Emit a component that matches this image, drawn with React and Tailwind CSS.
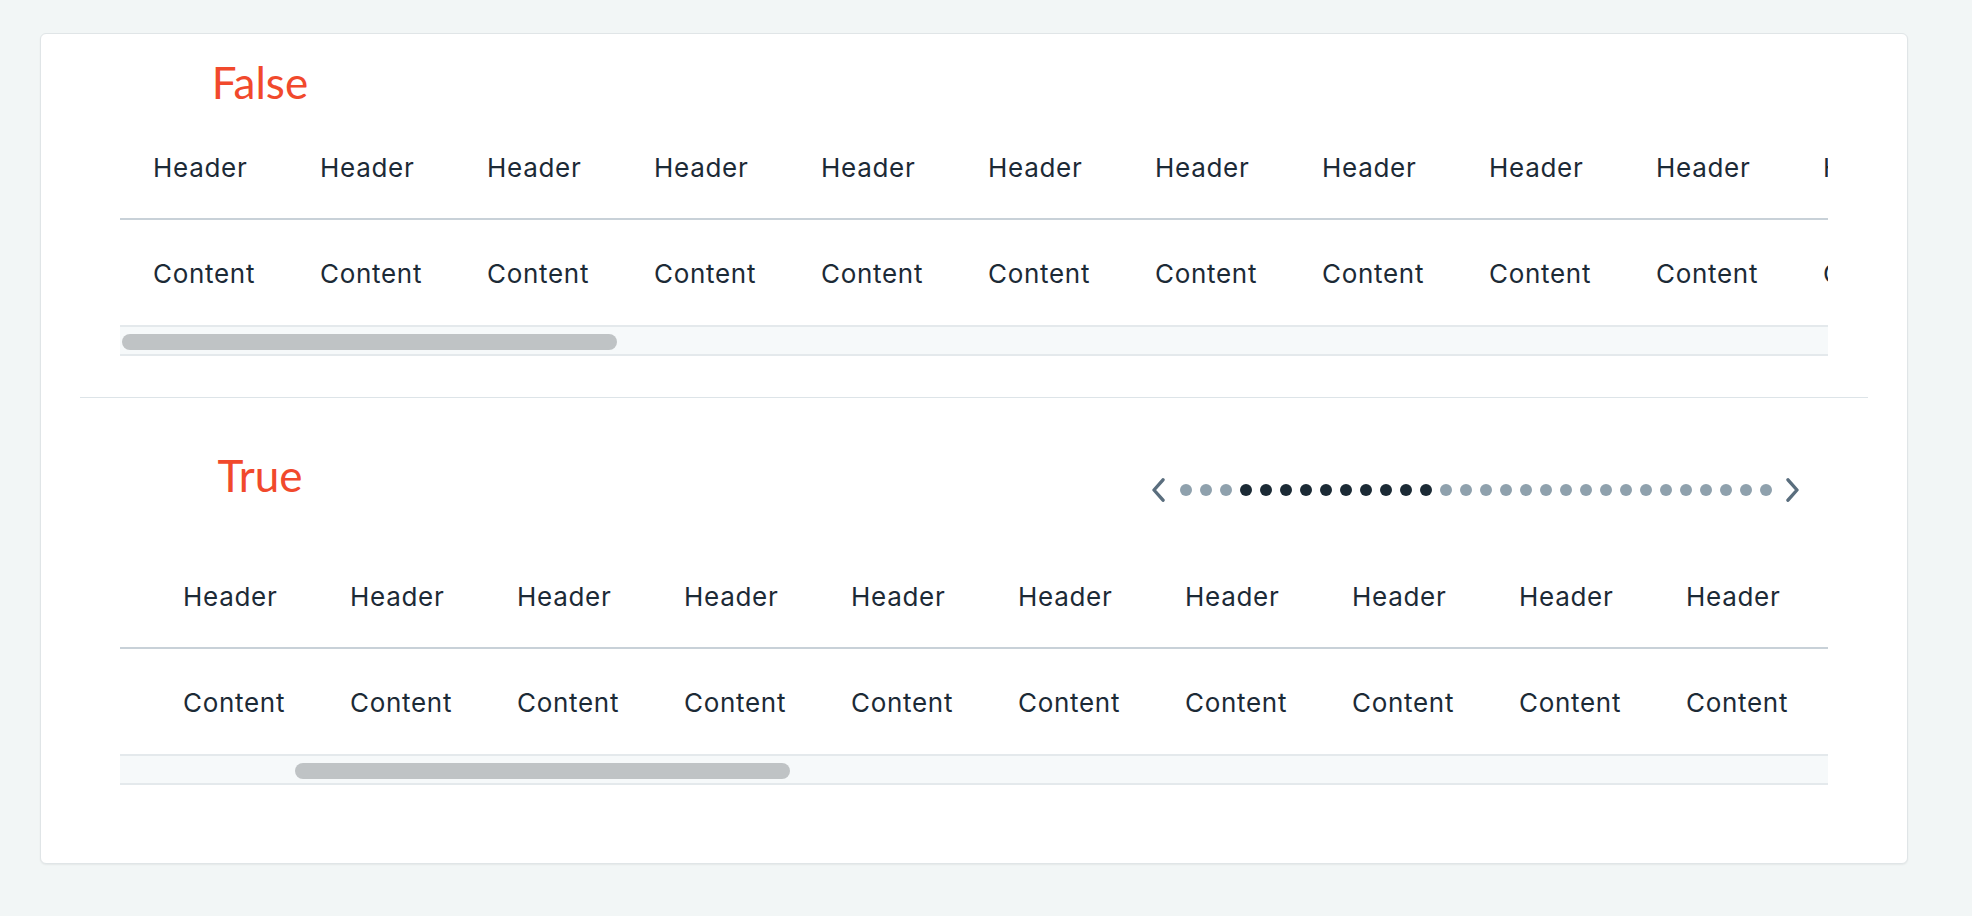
const COLS_OFF = Array.from({ length: 11 }, (_, i) => i)
const COLS_ON = Array.from({ length: 10 }, (_, i) => i)

function Chevron({ dir }) {
  const d = dir === 'left' ? 'M11 1.8 L2 12 L11 22.2' : 'M2 1.8 L11 12 L2 22.2'
  return (
    <svg width="13" height="24" viewBox="0 0 13 24" className="shrink-0">
      <path d={d} fill="none" stroke="#5a6e7e" strokeWidth="3.4" strokeLinecap="round" strokeLinejoin="round" />
    </svg>
  )
}

function Scrollbar({ offset }) {
  return (
    <div className="h-[31px] border-t-2 border-b-2 border-[#e4e9ec] bg-[#f6f9fa] pt-[7px]">
      <div className="h-[16px] w-[495px] rounded-full bg-[#bfc3c5]" style={{ marginLeft: offset }} />
    </div>
  )
}

function Table({ cols, shift, thumb }) {
  return (
    <div className="mx-[40px] overflow-hidden font-['Inter',sans-serif] text-[26px] tracking-[0.7px] text-[#1c2a36]">
      <div className="flex">
        {shift > 0 && <div className="w-[30px] shrink-0" />}
        {cols.map((i) => (
          <div key={i} className="w-[167px] shrink-0 whitespace-nowrap pl-[33px] pt-[34px] pb-[32px] leading-[37px]">
            Header
          </div>
        ))}
      </div>
      <div className="h-[2px] bg-[#c8d1d8]" />
      <div className="flex">
        {shift > 0 && <div className="w-[30px] shrink-0" />}
        {cols.map((i) => (
          <div key={i} className="w-[167px] shrink-0 whitespace-nowrap pl-[33px] pt-[35px] pb-[33px] leading-[37px]">
            Content
          </div>
        ))}
      </div>
      <Scrollbar offset={thumb} />
    </div>
  )
}

function Dots() {
  const dots = Array.from({ length: 30 }, (_, i) => i)
  return (
    <div className="ml-auto mr-[69px] mt-[80px] flex items-center">
      <Chevron dir="left" />
      <div className="ml-[15px] mr-[14px] flex gap-[8px]">
        {dots.map((i) => (
          <span
            key={i}
            className={`h-[12px] w-[12px] rounded-full ${i >= 3 && i < 13 ? 'bg-[#1b2a35]' : 'bg-[#8fa1ad]'}`}
          />
        ))}
      </div>
      <Chevron dir="right" />
    </div>
  )
}

export default function App() {
  return (
    <div className="min-h-[916px] bg-[#f2f6f6] pt-[33px] pl-[40px]">
      <div className="h-[831px] w-[1868px] rounded-[6px] border border-[#e0e5e7] bg-white px-[39px] pt-[27px] shadow-[0_1px_2px_rgba(0,0,0,0.06)]">

        {/* scroll buttons off */}
        <div className="w-[360px] text-center font-['Lato',sans-serif] text-[44px] leading-[43px] text-[#f1492c]">
          False
        </div>
        <div className="mt-[11px]">
          <Table cols={COLS_OFF} shift={0} thumb={2} />
        </div>

        <div className="mt-[41px] h-px bg-[#dde4e8]" />

        {/* scroll buttons on */}
        <div className="flex items-start">
          <div className="mt-[56px] w-[360px] text-center font-['Lato',sans-serif] text-[44px] leading-[43px] text-[#f1492c]">
            True
          </div>
          <Dots />
        </div>
        <div className="mt-[42px]">
          <Table cols={COLS_ON} shift={30} thumb={175} />
        </div>

      </div>
    </div>
  )
}
